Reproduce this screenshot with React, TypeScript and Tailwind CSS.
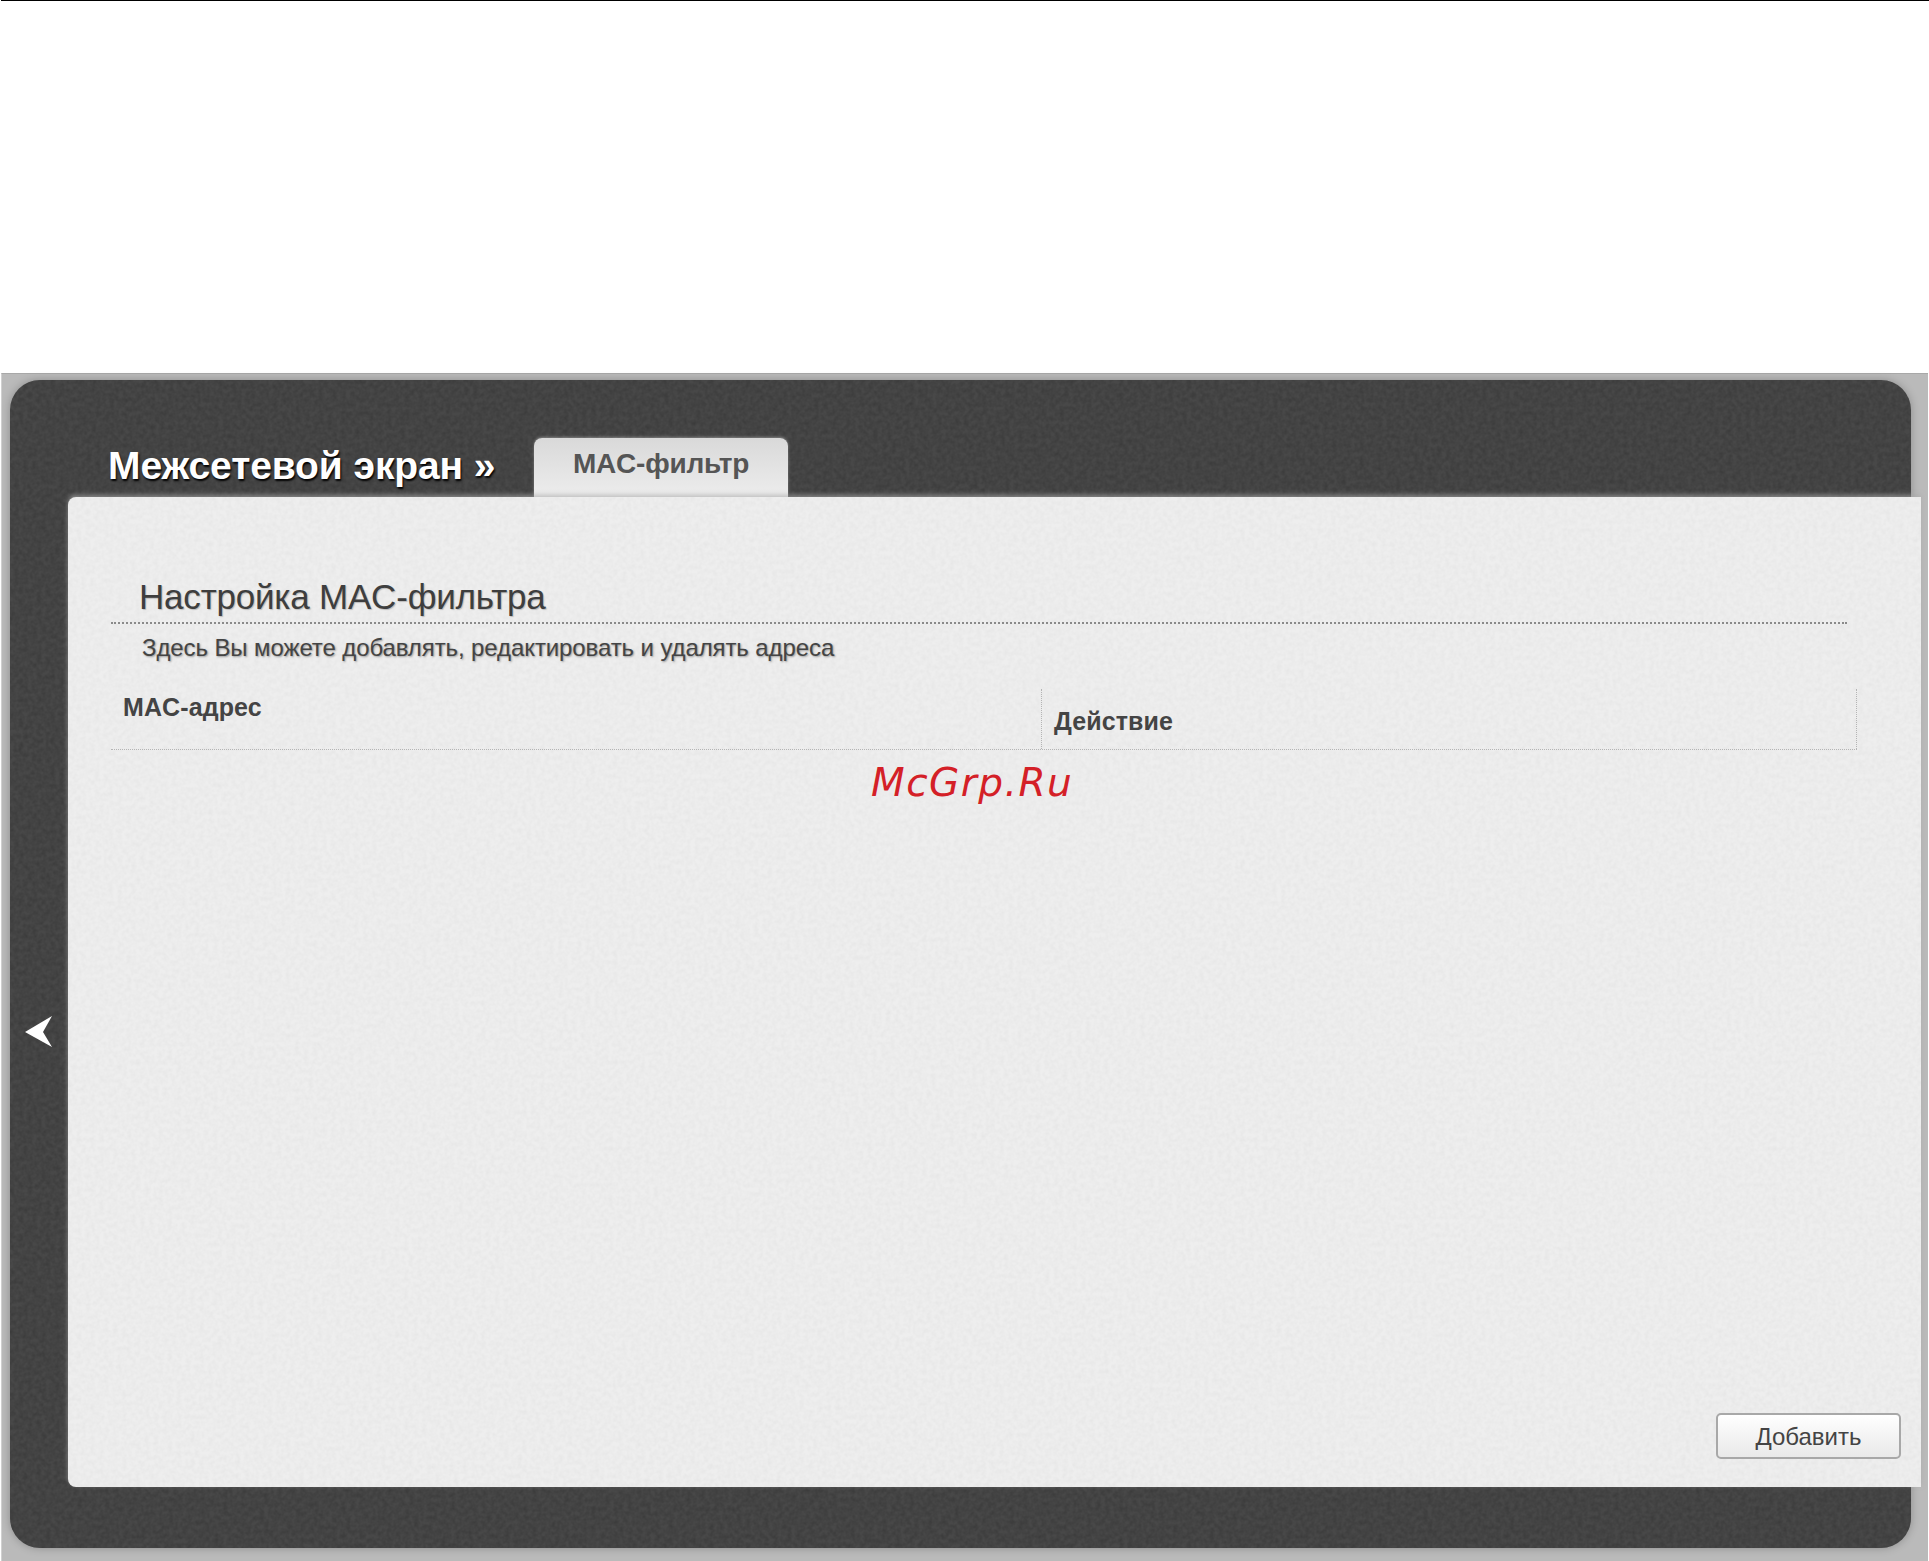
const sans = '[font-family:"Liberation_Sans",Arial,sans-serif]';

function Noise({ id, opacity, className }: { id: string; opacity: number; className: string }) {
  return (
    <svg className={`absolute inset-0 w-full h-full pointer-events-none ${className}`} style={{ opacity }}>
      <filter id={id}>
        <feTurbulence type="fractalNoise" baseFrequency="0.22" numOctaves={2} seed={4} />
        <feColorMatrix values="0 0 0 0 0  0 0 0 0 0  0 0 0 0 0  0.9 0 0 0 -0.25" />
      </filter>
      <rect width="100%" height="100%" filter={`url(#${id})`} />
    </svg>
  );
}

export default function App() {
  return (
    <div className={`w-[1929px] h-[1561px] bg-white overflow-hidden flex flex-col ${sans}`}>
      <div className="h-[373px] shrink-0 border-t border-black ml-px" />

      <div className="flex-1 ml-px mr-px bg-[#bababa] border-t border-[#a8a8a8] border-l border-l-[#d0d0d0] pt-[6px] pl-[8px] pr-[17px]">
        <div className="relative h-[1168px] rounded-[30px] bg-[#484848] shadow-[0_0_8px_rgba(0,0,0,0.25)]">
          <Noise id="darkNoise" opacity={0.3} className="rounded-[30px]" />

          <div className="relative h-[117px] flex items-end pl-[98px]">
            <h1 className="w-[426px] h-[59px] pt-[6px] text-[39px] leading-[44px] font-bold text-white tracking-[-0.1px] whitespace-nowrap [text-shadow:1px_2px_2px_#000]">
              Межсетевой экран »
            </h1>
            <div className="w-[254px] h-[59px] rounded-t-[8px] bg-gradient-to-b from-[#d9d9d9] to-[#ededed] shadow-[0_-1px_3px_rgba(255,255,255,0.35)] pt-[10px] text-center text-[28px] leading-[32px] font-bold text-[#555555] tracking-[-0.2px]">
              MAC-фильтр
            </div>
          </div>

          <div className="relative flex h-[990px]">
            <div className="w-[58px] shrink-0 pl-[15px] pt-[519px]">
              <svg width="28" height="32" viewBox="0 0 28 32">
                <path d="M0 16 L27 0 L18 16 L27 31 Z" fill="#ffffff" />
              </svg>
            </div>

            <div className="relative flex-1 mr-[-10px] rounded-l-[8px] bg-[#eeeeee] shadow-[0_-2px_5px_rgba(170,170,170,0.7)] pl-[43px] pr-[74px] pt-[77px] flex flex-col">
              <Noise id="lightNoise" opacity={0.05} className="rounded-l-[8px]" />

              <div className="relative border-b-2 border-dotted border-[#8a8a8a] h-[50px] pl-[28px]">
                <h2 className="text-[35px] leading-[46px] text-[#3e3e3e] tracking-[-0.2px] [text-shadow:1px_1px_1px_#bbb] whitespace-nowrap">
                  Настройка MAC-фильтра
                </h2>
              </div>
              <p className="relative pl-[31px] pt-[8px] text-[24px] leading-[32px] text-[#444444] tracking-[-0.1px] [text-shadow:1px_1px_2px_#999] whitespace-nowrap">
                Здесь Вы можете добавлять, редактировать и удалять адреса
              </p>

              <div className="relative mt-[25px] mr-[-10px] h-[61px] flex border-b border-dotted border-[#b4b4b4] text-[25px] font-bold text-[#444444] tracking-[0.1px]">
                <div className="w-[930px] pl-[12px] leading-[36px]">MAC-адрес</div>
                <div className="flex-1 border-l border-r border-dotted border-[#b4b4b4] pl-[12px] pt-[14px] leading-[36px]">Действие</div>
              </div>

              <div className="absolute left-[803px] top-[264px] text-[39px] leading-[44px] italic text-[#d42027] tracking-[1.5px] [font-family:'DejaVu_Sans',sans-serif]">
                McGrp.Ru
              </div>

              <div className="relative mt-auto mb-[28px] mr-[-54px] self-end w-[185px] h-[46px] rounded-[5px] border-2 border-[#a8a8a8] bg-gradient-to-b from-[#ffffff] to-[#e9e9e9] text-center text-[24px] leading-[44px] text-[#444444]">
                Добавить
              </div>
            </div>
          </div>
        </div>
      </div>
    </div>
  );
}
